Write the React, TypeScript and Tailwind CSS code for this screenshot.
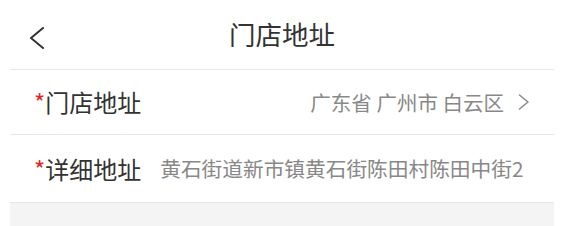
const font = { fontFamily: '"Noto Sans CJK SC", "Noto Sans", sans-serif' };

function BackIcon() {
  return (
    <svg className="absolute left-[19px] top-[27px]" width="16" height="22" viewBox="0 0 16 22" fill="none">
      <polyline points="14,1 2,11 14,21" stroke="#333" strokeWidth="2" strokeLinecap="round" strokeLinejoin="round" />
    </svg>
  );
}

function ArrowRight() {
  return (
    <svg className="ml-[14px]" width="12" height="16" viewBox="0 0 12 16" fill="none">
      <polyline points="1.5,1 10,8 1.5,15" stroke="#888" strokeWidth="1.5" strokeLinecap="round" strokeLinejoin="round" />
    </svg>
  );
}

export default function App() {
  return (
    <div className="flex h-[226px] w-[561px] flex-col bg-white pl-[10px] pr-[7px]" style={font}>
      <header className="relative flex h-[70px] shrink-0 items-center justify-center border-b border-[#e6e6e6]">
        <BackIcon />
        <h1 className="text-[26.5px] leading-none text-[#333]">门店地址</h1>
      </header>

      <div className="flex h-[65px] shrink-0 items-center border-b border-[#e6e6e6] pl-[24px] pr-[24px]">
        <span className="text-[24px] leading-none text-[#333]">
          <span className="text-[#e4231d]">*</span>门店地址
        </span>
        <span className="ml-auto text-[20.5px] leading-none text-[#888]">广东省 广州市 白云区</span>
        <ArrowRight />
      </div>

      <div className="flex h-[68px] shrink-0 items-center border-b border-[#e6e6e6] pl-[24px]">
        <span className="text-[24px] leading-none text-[#333]">
          <span className="text-[#e4231d]">*</span>详细地址
        </span>
        <span className="ml-[19px] whitespace-nowrap text-[20.7px] leading-none text-[#888]">
          黄石街道新市镇黄石街陈田村陈田中街2
        </span>
      </div>

      <div className="flex-1 bg-[#f4f4f4]" />
    </div>
  );
}
